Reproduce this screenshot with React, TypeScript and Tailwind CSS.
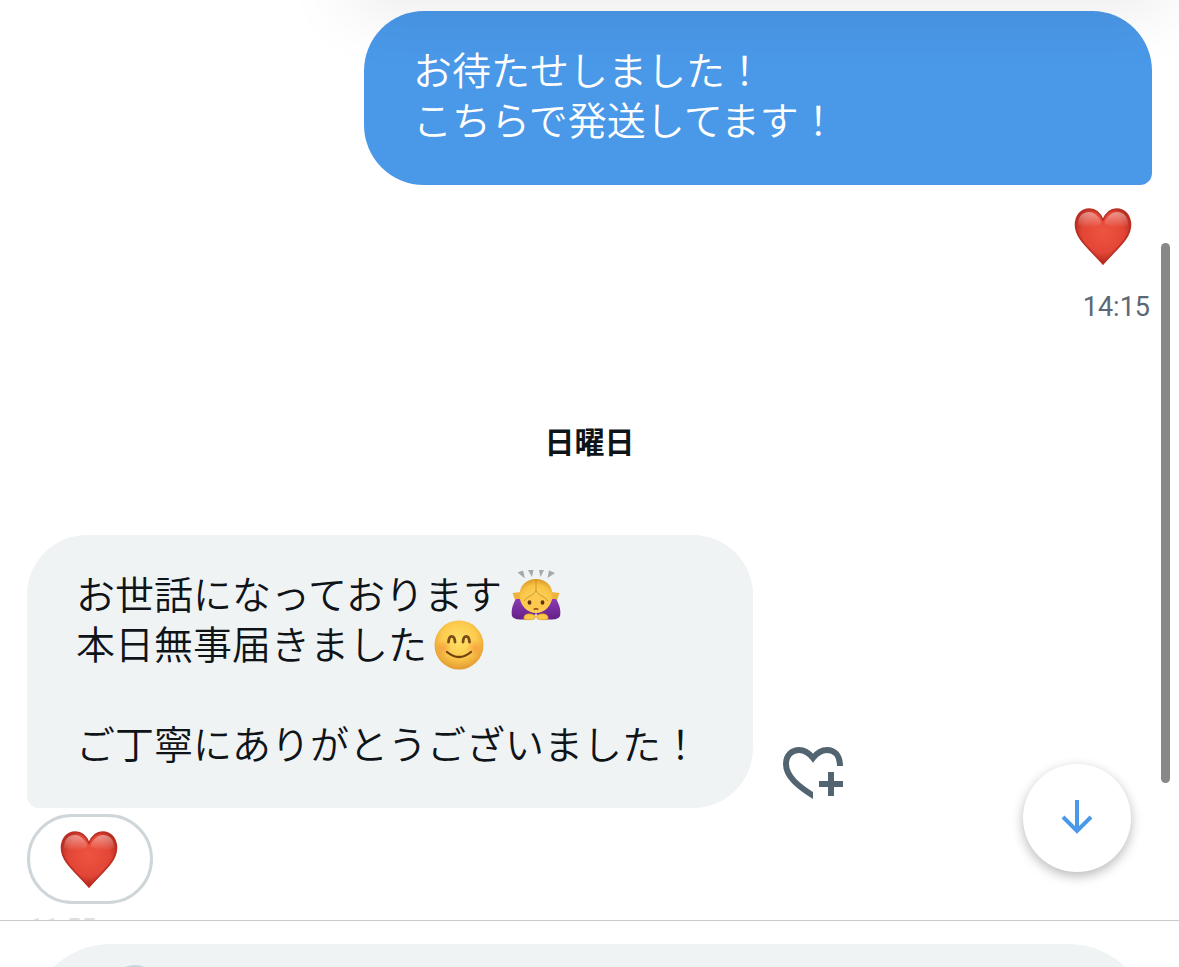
function Heart({ id }: { id: string }) {
  return (
    <svg viewBox="0 0 58 58" className="h-[58px] w-[58px]" role="img" aria-label="ハート">
      <defs>
        <radialGradient id={id} cx="0.5" cy="0.42" r="0.62">
          <stop offset="0" stopColor="#ee5340" />
          <stop offset="0.6" stopColor="#e34636" />
          <stop offset="0.8" stopColor="#c53426" />
          <stop offset="1" stopColor="#8c1a10" />
        </radialGradient>
        <linearGradient id={id + "-shine"} x1="0" y1="0" x2="0" y2="1">
          <stop offset="0" stopColor="#fff" stopOpacity="0.45" />
          <stop offset="1" stopColor="#fff" stopOpacity="0" />
        </linearGradient>
      </defs>
      <path
        d="M29 13C26 6 21 2 15.500 2C7 2 1.500 8.500 1.500 18C1.500 31 14 40 29 57C44 40 56.500 31 56.500 18C56.500 8.500 51 2 42.500 2C37 2 32 6 29 13Z"
        fill={"url(#" + id + ")"}
        stroke="#b92f24"
        strokeWidth="1.6"
      />
      <path
        d="M27.500 16C25 9 20 5 15 5C8 5 4 10 4 18C12 22 22 21 27.500 16Z"
        fill={"url(#" + id + "-shine)"}
      />
      <path
        d="M30.500 16C33 9 38 5 43 5C50 5 54 10 54 18C46 22 36 21 30.500 16Z"
        fill={"url(#" + id + "-shine)"}
      />
    </svg>
  );
}

function BowEmoji() {
  return (
    <svg viewBox="0 0 50 52" className="mt-[6px] ml-[9px] h-[52px] w-[50px] shrink-0" role="img" aria-label="お辞儀">
      <defs>
        <radialGradient id="hair" cx="0.5" cy="0.7" r="0.7">
          <stop offset="0" stopColor="#ffdc6b" />
          <stop offset="0.75" stopColor="#f8c344" />
          <stop offset="1" stopColor="#dc9927" />
        </radialGradient>
        <linearGradient id="sleeve" x1="0" y1="0" x2="0" y2="1">
          <stop offset="0" stopColor="#8a3bb5" />
          <stop offset="1" stopColor="#642086" />
        </linearGradient>
      </defs>
      <path d="M6.500 3.500L12 1.500L14 9.500ZM17 1H22.500L21 8ZM28 1H33L29.500 8ZM38 1.500L44 4L36.500 9Z" fill="#a5a9ac" />
      <path d="M1.500 24L10 23V34H5Z" fill="#eeb33d" />
      <path d="M48.500 24L40 23V34H45Z" fill="#eeb33d" />
      <path d="M5 30C1 36 0 43 1 47C3 51 10 51 17 50L25 45L14 30Z" fill="url(#sleeve)" />
      <path d="M45 30C49 36 50 43 49 47C47 51 40 51 33 50L25 45L36 30Z" fill="url(#sleeve)" />
      <path d="M25 10C15 10 8.500 17 8.500 26C8.500 36 16 44 25 44C34 44 41.500 36 41.500 26C41.500 17 35 10 25 10Z" fill="url(#hair)" />
      <path d="M25 24C21 28 16 28 13 32C15 39 19 43 25 43C31 43 35 39 37 32C34 28 29 28 25 24Z" fill="#fdc94f" />
      <path d="M25 10V22C22 27 16 27 13 32M25 22C28 27 34 27 37 32" fill="none" stroke="#d08f28" strokeWidth="0.9" />
      <ellipse cx="18.500" cy="33.500" rx="1.900" ry="2.200" fill="#5c3612" />
      <ellipse cx="31.500" cy="33.500" rx="1.900" ry="2.200" fill="#5c3612" />
      <path d="M22.500 40.500Q25 39 27.500 40.500" fill="none" stroke="#8a4b14" strokeWidth="1.300" />
      <path d="M13 48C14 44 21 44 24.500 47L23.500 50C20 51 15 51 13 50Z" fill="#fbc846" stroke="#d8962a" strokeWidth="0.700" />
      <path d="M37 48C36 44 29 44 25.500 47L26.500 50C30 51 35 51 37 50Z" fill="#fbc846" stroke="#d8962a" strokeWidth="0.700" />
    </svg>
  );
}

function SmileEmoji() {
  return (
    <svg viewBox="0 0 50 50" className="mt-[6px] ml-[7px] h-[50px] w-[50px] shrink-0" role="img" aria-label="笑顔">
      <defs>
        <radialGradient id="face" cx="0.5" cy="0.4" r="0.6">
          <stop offset="0" stopColor="#ffe268" />
          <stop offset="0.6" stopColor="#fccb4c" />
          <stop offset="1" stopColor="#e39a32" />
        </radialGradient>
        <radialGradient id="blush">
          <stop offset="0" stopColor="#f5853a" stopOpacity="0.55" />
          <stop offset="1" stopColor="#f5853a" stopOpacity="0" />
        </radialGradient>
      </defs>
      <circle cx="25" cy="25" r="24.500" fill="url(#face)" />
      <circle cx="9" cy="28" r="8.500" fill="url(#blush)" />
      <circle cx="41" cy="28" r="8.500" fill="url(#blush)" />
      <path d="M14.500 22C15 14.500 20.500 14.500 21 22M29 22C29.500 14.500 35 14.500 35.500 22" fill="none" stroke="#7a4a17" strokeWidth="2.800" strokeLinecap="round" />
      <path d="M13 32Q25 42 37 32" fill="none" stroke="#704012" strokeWidth="2.200" strokeLinecap="round" />
    </svg>
  );
}

export default function App() {
  return (
    <div className="relative flex h-screen flex-col overflow-hidden bg-white font-['Noto_Sans_CJK_JP',sans-serif] text-[#0f1419]">
      <main className="relative flex min-h-0 flex-1 flex-col overflow-hidden px-[27px] pt-[11px]">
        <section className="flex shrink-0 flex-col items-end">
          <p className="w-[788px] max-w-full rounded-[60px] rounded-br-[12px] bg-[#4a98e8] px-[49px] pt-8 pb-[42px] text-[39px] leading-[50px] font-[350] text-white">
            お待たせしました！
            <br />
            こちらで発送してます！
          </p>
          <div className="mt-[22px] mr-5">
            <Heart id="heart-sent" />
          </div>
          <time className="mt-[22px] mr-0.5 font-[Roboto,sans-serif] text-[27px] leading-[40px] text-[#5b6875]">14:15</time>
        </section>

        <h2 className="mt-[89px] shrink-0 text-center text-[30px] leading-[48px] font-bold">日曜日</h2>

        <section className="mt-[71px] flex shrink-0 flex-col items-start">
          <div className="flex items-end gap-[30px]">
            <p className="rounded-[60px] rounded-bl-[12px] bg-[#eff3f4] pt-8 pr-[53px] pb-[41px] pl-[49px] text-[39px] leading-[50px] font-[350]">
              <span className="flex h-[50px] items-center">お世話になっております<BowEmoji /></span>
              <span className="flex h-[50px] items-center">本日無事届きました<SmileEmoji /></span>
              <br />
              ご丁寧にありがとうございました！
            </p>
            <button type="button" aria-label="リアクションを追加" className="mb-2 text-[#536471]">
              <svg viewBox="0 0 62 54" className="h-[54px] w-[62px]" fill="none" stroke="currentColor" strokeWidth="6">
                <clipPath id="heart-left">
                  <path d="M0 0H62V24H30V54H0Z" />
                </clipPath>
                <path
                  clipPath="url(#heart-left)"
                  d="M34 52C14 40 3 30 3 18C3 9 9 4 16 4C22 4 26 7 30 12C34 7 38 4 44 4C51 4 57 9 57 20"
                  strokeLinejoin="miter"
                />
                <path d="M48 26V50M36 38H60" />
              </svg>
            </button>
          </div>
          <button
            type="button"
            className="mt-[6px] flex h-[90px] w-[126px] items-center justify-center rounded-full border-3 border-[#cfd6da] bg-white pr-[3px]"
          >
            <Heart id="heart-received" />
          </button>
          <time className="mt-[5px] ml-0.5 font-[Roboto,sans-serif] text-[27px] leading-[40px] text-[#5b6875] opacity-20">11:55</time>
        </section>

        <button
          type="button"
          aria-label="最新のメッセージへ"
          className="absolute right-12 bottom-12 flex h-[108px] w-[108px] items-center justify-center rounded-full bg-white text-[#4a98e8] shadow-[0_4px_12px_rgba(0,0,0,0.28)]"
        >
          <svg viewBox="0 0 32 36" className="h-9 w-8" fill="none" stroke="currentColor" strokeWidth="4">
            <path d="M16 0V32M2 17L16 31L30 17" />
          </svg>
        </button>
        <div className="absolute top-[243px] right-[9px] h-[540px] w-[9px] rounded-full bg-[#888888]" />
        <div className="pointer-events-none absolute -top-[60px] right-[10px] left-[350px] h-[60px] shadow-[0_4px_70px_rgba(0,0,0,0.1)]" />
      </main>

      <footer className="h-[47px] shrink-0 border-t border-[#c8cacc] bg-white px-[27px] pt-[23px]">
        <div className="flex h-[168px] items-start rounded-[84px] bg-[#eff3f4] pt-[21px] pl-[84px]">
          <button type="button" aria-label="画像を追加" className="h-12 w-12 rounded-full bg-[#c9d3de]" />
        </div>
      </footer>
    </div>
  );
}
